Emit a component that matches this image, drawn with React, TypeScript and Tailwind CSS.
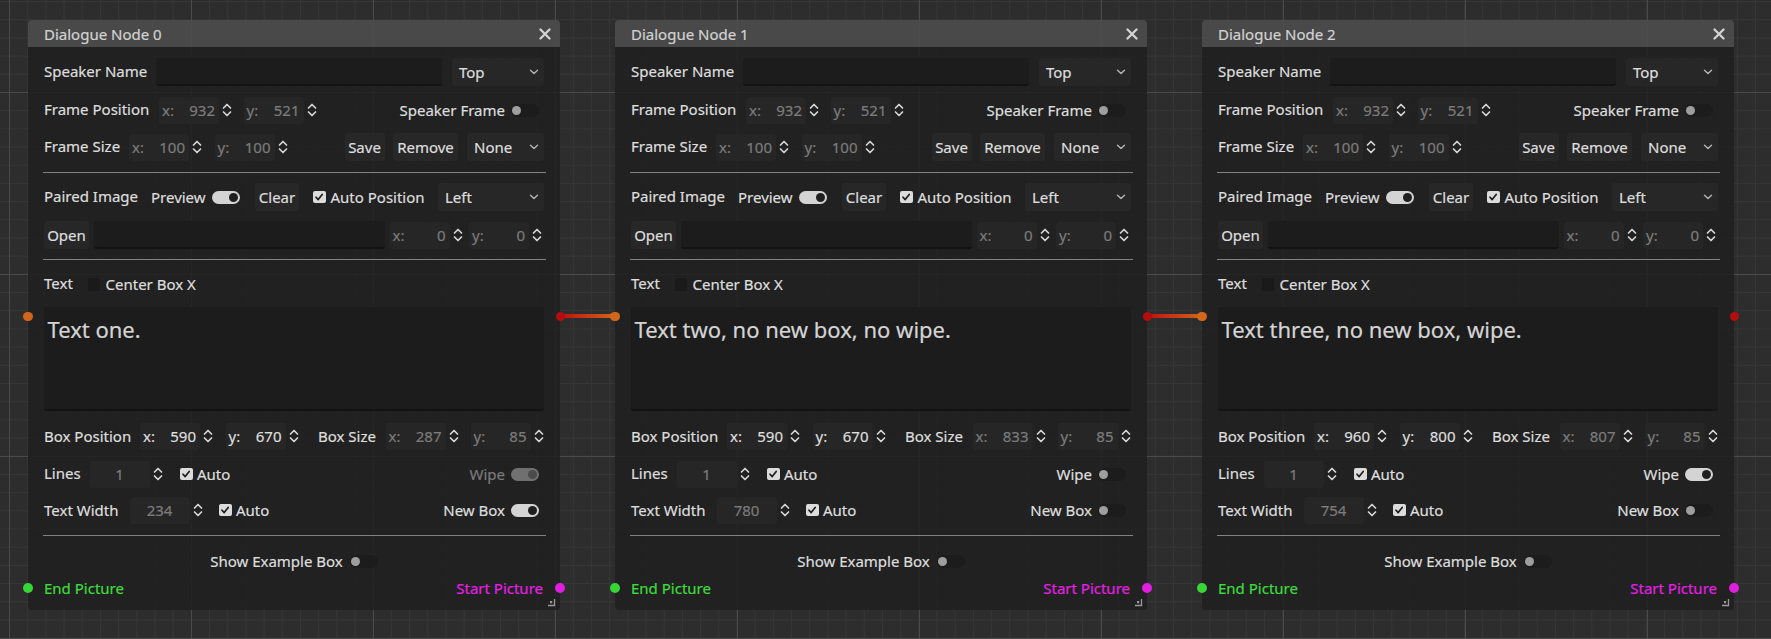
import React from "react";

type ToggleState = "on" | "off" | "disabledOn";

function UpDown() {
  return (
    <svg width="10" height="16" viewBox="0 0 10 16" className="ml-[3px] shrink-0">
      <path d="M1.5 6 L5 2.5 L8.5 6" fill="none" stroke="#d6d6d6" strokeWidth="1.7" strokeLinecap="round" strokeLinejoin="round" />
      <path d="M1.5 10 L5 13.5 L8.5 10" fill="none" stroke="#d6d6d6" strokeWidth="1.7" strokeLinecap="round" strokeLinejoin="round" />
    </svg>
  );
}

function Chevron() {
  return (
    <svg width="10" height="6" viewBox="0 0 10 6" className="shrink-0">
      <path d="M1.5 1.2 L5 4.6 L8.5 1.2" fill="none" stroke="#b4b4b4" strokeWidth="1.4" strokeLinecap="round" strokeLinejoin="round" />
    </svg>
  );
}

function Spin({
  prefix,
  value,
  dim,
  center,
  ml,
}: {
  prefix?: string;
  value: string;
  dim?: boolean;
  center?: boolean;
  ml?: string;
}) {
  const col = dim ? "text-[#7c7c7c]" : "text-[#dedede]";
  return (
    <div className={`flex items-center shrink-0 ${ml ?? ""}`}>
      <div
        className={`h-[27px] w-[60px] rounded-[3px] bg-[#262626] flex items-center pl-[3px] pr-[4px] ${col}`}
      >
        {prefix ? <span>{prefix}</span> : null}
        {center ? (
          <span className="flex-1 text-center">{value}</span>
        ) : (
          <span className="ml-auto">{value}</span>
        )}
      </div>
      <UpDown />
    </div>
  );
}

function Toggle({ state, className }: { state: ToggleState; className?: string }) {
  if (state === "off") {
    return (
      <div className={`relative h-[13px] w-[28px] rounded-full bg-[#1c1c1c] shrink-0 ${className ?? ""}`}>
        <div className="absolute left-[1px] top-[2px] h-[9px] w-[9px] rounded-full bg-[#9e9e9e]" />
      </div>
    );
  }
  const track = state === "on" ? "bg-[#d4d4d4]" : "bg-[#707070]";
  const dot = state === "on" ? "bg-[#1f1f1f]" : "bg-[#4b4b4b]";
  return (
    <div className={`relative h-[13px] w-[28px] rounded-full ${track} shrink-0 ${className ?? ""}`}>
      <div className={`absolute right-[2px] top-[2px] h-[9px] w-[9px] rounded-full ${dot}`} />
    </div>
  );
}

function Check({ checked, className }: { checked: boolean; className?: string }) {
  if (!checked) {
    return <div className={`h-[13px] w-[12px] rounded-[2px] bg-[#1a1a1a] shrink-0 ${className ?? ""}`} />;
  }
  return (
    <div className={`h-[12.5px] w-[12.5px] rounded-[2px] bg-[#dcdcdc] shrink-0 flex items-center justify-center ${className ?? ""}`}>
      <svg width="10" height="10" viewBox="0 0 10 10">
        <path d="M2 5.2 L4.2 7.6 L8.2 2.4" fill="none" stroke="#1e1e1e" strokeWidth="1.7" strokeLinecap="round" strokeLinejoin="round" />
      </svg>
    </div>
  );
}

function Button({ label, w, className }: { label: string; w: string; className?: string }) {
  return (
    <div className={`h-[28px] ${w} rounded-[3px] bg-[#272727] flex items-center justify-center text-[#dedede] shrink-0 ${className ?? ""}`}>
      {label}
    </div>
  );
}

function Dropdown({ label, w, className }: { label: string; w: string; className?: string }) {
  return (
    <div className={`h-[28px] ${w} rounded-[3px] bg-[#272727] flex items-center pl-[7px] pr-[5px] text-[#dedede] shrink-0 ${className ?? ""}`}>
      <span className="flex-1">{label}</span>
      <Chevron />
    </div>
  );
}

function Sep({ className }: { className?: string }) {
  return <div className={`h-px bg-[#838383] -mx-[1.5px] ${className ?? ""}`} />;
}

type NodeData = {
  idx: number;
  text: string;
  bx: string;
  by: string;
  sx: string;
  sy: string;
  wipe: ToggleState;
  tw: string;
  newBox: ToggleState;
  connectRight: boolean;
};

function Node({ d }: { d: NodeData }) {
  const wipeLabel = d.wipe === "disabledOn" ? "text-[#7a7a7a]" : "text-[#dedede]";
  return (
    <div className="relative w-[532px] shrink-0 text-[15px] leading-[20px] text-[#dedede] [-webkit-text-stroke:0.2px_currentColor]">
      {/* title */}
      <div className="h-[27px] rounded-t-[4px] bg-[rgba(76,76,76,0.9)] flex items-center pl-[16px] pr-[8px]">
        <span className="text-[#d2d2d2] flex-1">Dialogue Node {d.idx}</span>
        <svg width="12" height="12" viewBox="0 0 12 12" className="mr-[1px]">
          <path d="M1.5 1.5 L10.5 10.5 M10.5 1.5 L1.5 10.5" stroke="#d4d4d4" strokeWidth="2.3" strokeLinecap="round" />
        </svg>
      </div>
      {/* body */}
      <div className="rounded-b-[4px] bg-[rgba(31,31,31,0.86)] px-[16px] pt-[11px] pb-[9px] flex flex-col">
        {/* Speaker name */}
        <div className="h-[28px] flex items-center">
          <span className="w-[112px] shrink-0 pb-[3px]">Speaker Name</span>
          <div className="h-[28px] flex-1 rounded-[3px] bg-[#1c1c1c] border-b-[2px] border-[#131313]" />
          <Dropdown label="Top" w="w-[92px]" className="ml-[10px]" />
        </div>
        {/* Frame position */}
        <div className="h-[28px] flex items-center mt-[10px]">
          <span className="w-[115px] shrink-0 pb-[3px]">Frame Position</span>
          <Spin prefix="x:" value="932" dim />
          <Spin prefix="y:" value="521" dim ml="ml-[11.5px]" />
          <div className="flex-1" />
          <span>Speaker Frame</span>
          <Toggle state="off" className="ml-[6px] mr-[5px]" />
        </div>
        {/* Frame size */}
        <div className="h-[28px] flex items-center mt-[9px]">
          <span className="w-[85px] shrink-0 pb-[3px]">Frame Size</span>
          <Spin prefix="x:" value="100" dim />
          <Spin prefix="y:" value="100" dim ml="ml-[12.5px]" />
          <div className="flex-1" />
          <Button label="Save" w="w-[40px]" />
          <Button label="Remove" w="w-[65px]" className="ml-[8.5px]" />
          <Dropdown label="None" w="w-[77px]" className="ml-[9px]" />
        </div>
        <Sep className="mt-[10.5px]" />
        {/* Paired image */}
        <div className="h-[28px] flex items-center mt-[10.5px]">
          <span className="w-[107px] shrink-0 pb-[3px]">Paired Image</span>
          <span className="w-[55px] shrink-0">Preview</span>
          <Toggle state="on" className="ml-[6px]" />
          <Button label="Clear" w="w-[44px]" className="ml-[15px]" />
          <Check checked className="ml-[14px]" />
          <span className="ml-[5px] whitespace-nowrap">Auto Position</span>
          <div className="flex-1" />
          <Dropdown label="Left" w="w-[106px]" />
        </div>
        {/* Open */}
        <div className="h-[28px] flex items-center mt-[10px]">
          <Button label="Open" w="w-[45px]" />
          <div className="h-[28px] flex-1 ml-[4.5px] rounded-[3px] bg-[#1c1c1c] border-b-[2px] border-[#131313]" />
          <Spin prefix="x:" value="0" dim ml="ml-[5px]" />
          <Spin prefix="y:" value="0" dim ml="ml-[6.5px]" />
          <div className="w-[2px]" />
        </div>
        <Sep className="mt-[10px]" />
        {/* Text row */}
        <div className="h-[28px] flex items-center mt-[10px]">
          <span className="w-[44px] shrink-0 pb-[3px]">Text</span>
          <Check checked={false} />
          <span className="ml-[5.5px]">Center Box X</span>
        </div>
        {/* Textarea */}
        <div className="mt-[9px] h-[104px] rounded-[3px] bg-[#1c1c1c] border-b-[2px] border-[#131313] pl-[3.5px] pt-[7px] text-[22px] leading-[30px] text-[#d4d4d4]">
          {d.text}
        </div>
        {/* Box position */}
        <div className="h-[28px] flex items-center mt-[11px]">
          <span className="w-[96px] shrink-0">Box Position</span>
          <Spin prefix="x:" value={d.bx} />
          <Spin prefix="y:" value={d.by} ml="ml-[12.5px]" />
          <span className="ml-[19.5px] w-[67.5px] shrink-0">Box Size</span>
          <Spin prefix="x:" value={d.sx} dim />
          <Spin prefix="y:" value={d.sy} dim ml="ml-[12px]" />
        </div>
        {/* Lines */}
        <div className="h-[28px] flex items-center mt-[10px]">
          <span className="w-[46px] shrink-0 pb-[3px]">Lines</span>
          <Spin value="1" dim center />
          <Check checked className="ml-[17px]" />
          <span className="ml-[4.5px]">Auto</span>
          <div className="flex-1" />
          <span className={wipeLabel}>Wipe</span>
          <Toggle state={d.wipe} className="ml-[6px] mr-[5px]" />
        </div>
        {/* Text width */}
        <div className="h-[28px] flex items-center mt-[8px]">
          <span className="w-[86px] shrink-0">Text Width</span>
          <Spin value={d.tw} dim center />
          <Check checked className="ml-[16px]" />
          <span className="ml-[4.5px]">Auto</span>
          <div className="flex-1" />
          <span>New Box</span>
          <Toggle state={d.newBox} className="ml-[6px] mr-[5px]" />
        </div>
        <Sep className="mt-[10.5px]" />
        {/* Show example */}
        <div className="h-[28px] flex items-center justify-center mt-[11.5px]">
          <span>Show Example Box</span>
          <Toggle state="off" className="ml-[7px]" />
        </div>
        {/* Ports row */}
        <div className="h-[26px] flex items-center">
          <span className="text-[#3ddc3d]">End Picture</span>
          <div className="flex-1" />
          <span className="text-[#e51fe5] mr-[1px]">Start Picture</span>
        </div>
      </div>

      {/* resize grip */}
      <svg width="9" height="9" viewBox="0 0 9 9" className="absolute right-[4px] bottom-[3px]">
        <path d="M7.5 1 V7.5 H1" fill="none" stroke="#9a9a9a" strokeWidth="1.3" />
        <rect x="3" y="3" width="2.2" height="2.2" fill="#9a9a9a" />
      </svg>

      {/* connection to next node */}
      {d.connectRight ? (
        <div className="absolute left-[532px] top-[294px] h-[4px] w-[56px] bg-[linear-gradient(to_right,#bf0f0f,#d4661a)]" />
      ) : null}

      {/* text slot ports */}
      <div className="absolute left-[-5px] top-[291.5px] h-[9.5px] w-[9.5px] rounded-full bg-[#d2661a]" />
      <div className="absolute right-[-5px] top-[291.5px] h-[9.5px] w-[9.5px] rounded-full bg-[#b30d0d]" />
      {/* picture ports */}
      <div className="absolute left-[-5px] top-[563px] h-[10px] w-[10px] rounded-full bg-[#37d637]" />
      <div className="absolute right-[-5px] top-[563px] h-[10px] w-[10px] rounded-full bg-[#e01ee0]" />
    </div>
  );
}

const nodes: NodeData[] = [
  { idx: 0, text: "Text one.", bx: "590", by: "670", sx: "287", sy: "85", wipe: "disabledOn", tw: "234", newBox: "on", connectRight: true },
  { idx: 1, text: "Text two, no new box, no wipe.", bx: "590", by: "670", sx: "833", sy: "85", wipe: "off", tw: "780", newBox: "off", connectRight: true },
  { idx: 2, text: "Text three, no new box, wipe.", bx: "960", by: "800", sx: "807", sy: "85", wipe: "on", tw: "754", newBox: "off", connectRight: false },
];

export default function App() {
  return (
    <div
      className="[font-family:'Noto_Sans',sans-serif] w-[1771px] h-[639px] overflow-hidden bg-[#2d2d2d] [background-image:linear-gradient(to_bottom,#4a4a4a_1px,transparent_1px),linear-gradient(to_right,#4a4a4a_1px,transparent_1px),linear-gradient(to_bottom,#363636_1px,transparent_1px),linear-gradient(to_right,#363636_1px,transparent_1px)] [background-size:182px_182px,182px_182px,18.2px_18.2px,18.2px_18.2px] [background-position:9px_92px] flex items-start gap-[55px] pl-[28px] pt-[20px]"
    >
      {nodes.map((d) => (
        <Node key={d.idx} d={d} />
      ))}
    </div>
  );
}
